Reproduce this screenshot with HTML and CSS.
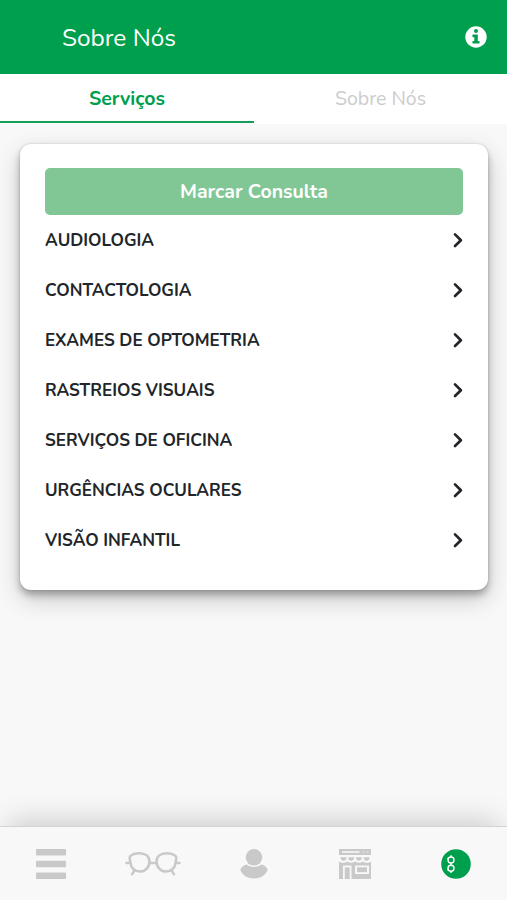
FILE: index.html
```html
<!DOCTYPE html>
<html lang="pt">
<head>
<meta charset="utf-8">
<title>Sobre Nós</title>
<link rel="stylesheet" href="styles.css">
</head>
<body>
<header class="bar">
  <h1 class="title"><span>Sobre Nós</span></h1>
  <svg class="info" viewBox="0 0 22 22"><circle cx="11" cy="11" r="10.7" fill="#fff"/><circle cx="11" cy="4.9" r="2" fill="#009f4d"/><path d="M7.5 8.6h5.3v6.3h1.7v2.7h-7v-2.7h1.8v-3.6H7.500z" fill="#009f4d"/></svg>
</header>
<nav class="tabs">
  <a class="tab active"><span>Serviços</span></a>
  <a class="tab"><span>Sobre Nós</span></a>
</nav>
<main class="content">
  <section class="card">
    <button class="book">Marcar Consulta</button>
    <ul class="list">
      <li><span>AUDIOLOGIA</span><svg class="chev" viewBox="0 0 12 16"><path d="M3 2.400 8.900 8.200 3 14"/></svg></li>
      <li><span>CONTACTOLOGIA</span><svg class="chev" viewBox="0 0 12 16"><path d="M3 2.400 8.900 8.200 3 14"/></svg></li>
      <li><span>EXAMES DE OPTOMETRIA</span><svg class="chev" viewBox="0 0 12 16"><path d="M3 2.400 8.900 8.200 3 14"/></svg></li>
      <li><span>RASTREIOS VISUAIS</span><svg class="chev" viewBox="0 0 12 16"><path d="M3 2.400 8.900 8.200 3 14"/></svg></li>
      <li><span>SERVIÇOS DE OFICINA</span><svg class="chev" viewBox="0 0 12 16"><path d="M3 2.400 8.900 8.200 3 14"/></svg></li>
      <li><span>URGÊNCIAS OCULARES</span><svg class="chev" viewBox="0 0 12 16"><path d="M3 2.400 8.900 8.200 3 14"/></svg></li>
      <li><span>VISÃO INFANTIL</span><svg class="chev" viewBox="0 0 12 16"><path d="M3 2.400 8.900 8.200 3 14"/></svg></li>
    </ul>
  </section>
</main>
<footer class="dock">
  <a><svg width="30" height="30" viewBox="0 0 30 30" fill="#c9c9c9"><rect width="30" height="6.4" rx="1"/><rect y="11.8" width="30" height="6.4" rx="1"/><rect y="23.6" width="30" height="6.4" rx="1"/></svg></a>
  <a><svg width="56" height="26" viewBox="0 0 56 26" fill="none" stroke="#c9c9c9" stroke-width="2.600" stroke-linecap="round" stroke-linejoin="round"><path d="M5 5.500C7 3 10.500 2.200 14.500 2.200c6 0 10 3.300 10 8.300 0 5.500-4.200 10-9.500 10S5.800 16.500 5.500 12C5.300 9.500 4 7.500 5 5.500zM51 5.500C49 3 45.500 2.200 41.500 2.200c-6 0-10 3.300-10 8.300 0 5.500 4.200 10 9.500 10s9.200-4 9.500-8.500c.2-2.500 1.500-4.500.5-6.500zM24.500 12h7M1.500 12h4M50.500 12h4M9 18.500c.3 2-.7 3-2 4.700M47 18.500c-.3 2 .7 3 2 4.700"/></svg></a>
  <a><svg width="30" height="30" viewBox="0 0 30 30" fill="#c9c9c9"><circle cx="15" cy="8.300" r="8.300"/><path d="M7.500 15.500c4 3.300 11 3.300 15 0 3 .4 5.500 2.800 6.200 5.500C26.500 26 21.500 29.500 15 29.500S3.500 26 1.300 21c.7-2.700 3.200-5.100 6.200-5.500z"/></svg></a>
  <a><svg width="34" height="30" viewBox="0 0 34 30"><g fill="#c9c9c9"><path d="M1 0h32v6H1z"/><path d="M2.500 8.200h6c0 4.800-6 4.800-6 0zM10.200 8.200h6c0 4.800-6 4.800-6 0zM17.900 8.200h6c0 4.800-6 4.800-6 0zM25.600 8.200h6c0 4.800-6 4.800-6 0z"/><path d="M1 12.500c2 1.700 6 1.700 8.300 0 2.300 1.700 5.400 1.700 7.700 0 2.300 1.700 5.400 1.700 7.700 0 2.300 1.700 6.300 1.700 8.300 0V30H1z"/></g><g fill="#f8f8f8"><rect x="4" y="2" width="17.500" height="2" opacity=".8"/><rect x="24.500" y="2" width="2" height="2" opacity=".4"/><rect x="28.500" y="2" width="2" height="2" opacity=".4"/><path d="M5 16.500h8.500V30h-1.800V18.500H6.800V30H5zM17 16.500h14V25H17z"/></g><path fill="#c9c9c9" d="M19 18.300h10v4.900H19z"/></svg></a>
  <a class="last"><svg width="30" height="30" viewBox="0 0 30 30"><circle cx="15" cy="15" r="14.800" fill="#009f4d"/><g fill="none" stroke="#fff" stroke-width="1.400"><circle cx="10" cy="11" r="3"/><circle cx="10" cy="19.200" r="3"/><path d="M10 6.300V8M10 14v2.200M10 22.200v1.800M7.400 9.300l-1 .3M7.400 21l-1-.3"/></g></svg></a>
</footer>
</body>
</html>
```
FILE: styles.css
```css
* { box-sizing: border-box; }
body {
  margin: 0;
  height: 900px;
  display: flex;
  flex-direction: column;
  overflow: hidden;
  background: #f8f8f8;
  color: #212529;
  font-family: Nunito, "Noto Sans", sans-serif;
}
.bar {
  height: 74px;
  flex: none;
  display: flex;
  align-items: center;
  justify-content: space-between;
  padding: 0 20px 0 62px;
  background: #009f4d;
  color: #fff;
}
.title { margin: 0; padding-top: 1px; font-size: 24.4px; font-weight: 400; }
.info { width: 22px; height: 22px; }
.tabs {
  height: 50px;
  flex: none;
  display: grid;
  grid-template-columns: 254px 1fr;
  align-items: start;
  background: #fff;
}
.tab {
  height: 49px;
  display: flex;
  align-items: center;
  justify-content: center;
  padding-top: 2px;
  border-bottom: 2px solid transparent;
  color: #ccc;
  font-size: 19.5px;
}
.tab.active { border-color: #139f57; color: #009f4d; font-weight: 700; }
.content { flex: 1; padding: 20px 19px 0 20px; }
.card {
  height: 446px;
  padding: 24px 25px;
  border-radius: 11px;
  background: #fff;
  box-shadow: 0 0 2px rgba(0, 0, 0, .2), 0 5px 7px rgba(0, 0, 0, .27), 0 9px 24px rgba(0, 0, 0, .2);
}
.book {
  display: block;
  width: 100%;
  height: 47px;
  padding: 0;
  border: 0;
  border-radius: 5px;
  background: #80c795;
  color: #fff;
  font: 700 19.5px Nunito, "Noto Sans", sans-serif;
}
.list { margin: 0; padding: 0; list-style: none; }
.list li {
  height: 50px;
  display: flex;
  align-items: center;
  justify-content: space-between;
  font-size: 17.1px;
  font-weight: 700;
  white-space: nowrap;
}
.chev {
  width: 12px;
  height: 16px;
  margin-right: -1px;
  fill: none;
  stroke: #212529;
  stroke-width: 2.7;
  stroke-linecap: round;
  stroke-linejoin: round;
}
.dock {
  height: 74px;
  flex: none;
  display: grid;
  grid-template-columns: repeat(5, 1fr);
  border-top: 1px solid #d3d3d3;
  background: #f8f8f8;
  box-shadow: 0 -14px 28px -8px rgba(0, 0, 0, .17);
}
.dock a { display: flex; align-items: center; justify-content: center; padding-left: 1px; }
.dock .last { padding-left: 0; }
```
